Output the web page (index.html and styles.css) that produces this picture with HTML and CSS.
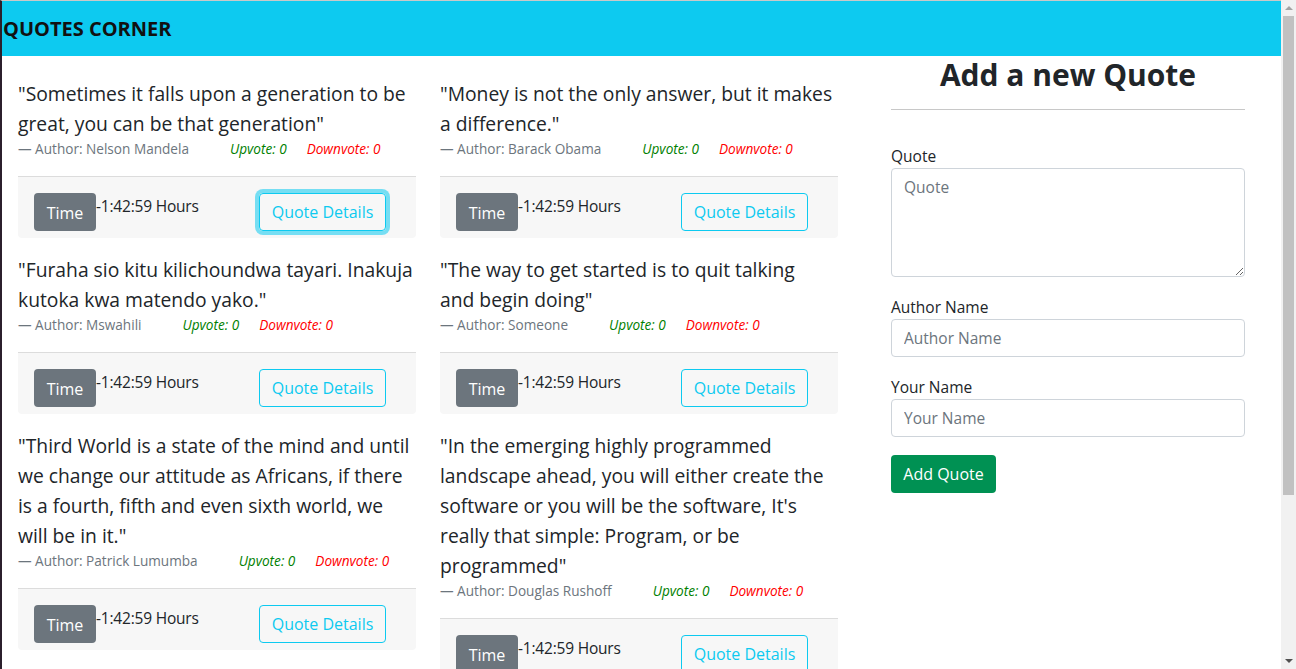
FILE: index.html
```html
<!DOCTYPE html>
<html lang="en">
<head>
<meta charset="utf-8">
<title>Quotes Corner</title>
<link rel="stylesheet" href="styles.css">
</head>
<body>
<nav class="navbar"><span class="brand">QUOTES CORNER</span></nav>
<main class="page">
  <section class="quotes">
    <article class="quote">
      <p class="quote-text">"Sometimes it falls upon a generation to be great, you can be that generation"</p>
      <p class="meta"><span class="author">— Author: Nelson Mandela</span><span class="up">Upvote: 0</span><span class="down">Downvote: 0</span></p>
      <div class="quote-foot">
        <div class="time-group"><span class="btn btn-time">Time</span><span class="time-val">-1:42:59 Hours</span></div>
        <button class="btn btn-details focused">Quote Details</button>
      </div>
    </article>
    <article class="quote">
      <p class="quote-text">"Money is not the only answer, but it makes a difference."</p>
      <p class="meta"><span class="author">— Author: Barack Obama</span><span class="up">Upvote: 0</span><span class="down">Downvote: 0</span></p>
      <div class="quote-foot">
        <div class="time-group"><span class="btn btn-time">Time</span><span class="time-val">-1:42:59 Hours</span></div>
        <button class="btn btn-details">Quote Details</button>
      </div>
    </article>
    <article class="quote">
      <p class="quote-text">"Furaha sio kitu kilichoundwa tayari. Inakuja kutoka kwa matendo yako."</p>
      <p class="meta"><span class="author">— Author: Mswahili</span><span class="up">Upvote: 0</span><span class="down">Downvote: 0</span></p>
      <div class="quote-foot">
        <div class="time-group"><span class="btn btn-time">Time</span><span class="time-val">-1:42:59 Hours</span></div>
        <button class="btn btn-details">Quote Details</button>
      </div>
    </article>
    <article class="quote">
      <p class="quote-text">"The way to get started is to quit talking and&nbsp;begin doing"</p>
      <p class="meta"><span class="author">— Author: Someone</span><span class="up">Upvote: 0</span><span class="down">Downvote: 0</span></p>
      <div class="quote-foot">
        <div class="time-group"><span class="btn btn-time">Time</span><span class="time-val">-1:42:59 Hours</span></div>
        <button class="btn btn-details">Quote Details</button>
      </div>
    </article>
    <article class="quote">
      <p class="quote-text">"Third World is a state of the mind and until we change our attitude as Africans, if there is a fourth, fifth and even sixth world, we will be in it."</p>
      <p class="meta"><span class="author">— Author: Patrick Lumumba</span><span class="up">Upvote: 0</span><span class="down">Downvote: 0</span></p>
      <div class="quote-foot">
        <div class="time-group"><span class="btn btn-time">Time</span><span class="time-val">-1:42:59 Hours</span></div>
        <button class="btn btn-details">Quote Details</button>
      </div>
    </article>
    <article class="quote">
      <p class="quote-text">"In the emerging highly programmed landscape ahead, you will either create the software or you will be the software, It's really that simple: Program, or be programmed"</p>
      <p class="meta"><span class="author">— Author: Douglas Rushoff</span><span class="up">Upvote: 0</span><span class="down">Downvote: 0</span></p>
      <div class="quote-foot">
        <div class="time-group"><span class="btn btn-time">Time</span><span class="time-val">-1:42:59 Hours</span></div>
        <button class="btn btn-details">Quote Details</button>
      </div>
    </article>
  </section>
  <aside class="form-panel">
    <h2 class="form-title">Add a new Quote</h2>
    <hr class="rule">
    <form class="quote-form">
      <div class="field">
        <label class="label" for="q">Quote</label>
        <textarea id="q" class="control textarea" placeholder="Quote"></textarea>
      </div>
      <div class="field">
        <label class="label" for="a">Author Name</label>
        <input id="a" class="control" type="text" placeholder="Author Name">
      </div>
      <div class="field">
        <label class="label" for="y">Your Name</label>
        <input id="y" class="control" type="text" placeholder="Your Name">
      </div>
      <button type="button" class="btn btn-add">Add Quote</button>
    </form>
  </aside>
</main>
<div class="scrollbar" aria-hidden="true">
  <span class="sb-arrow sb-up"></span>
  <span class="sb-thumb"></span>
  <span class="sb-arrow sb-down"></span>
</div>
</body>
</html>
```
FILE: styles.css
```css
html{background:#fff}
body{
  margin:0;
  border-left:2px solid #2b1f2c;
  border-top:1px solid #c9c9c9;
  font-family:"Open Sans","Noto Sans",sans-serif;
  font-size:16px;
  line-height:1.5;
  color:#212529;
  min-height:895px;
  box-sizing:border-box;
}
.navbar{
  background:#0dcaf0;
  height:55px;
  display:flex;
  align-items:center;
  padding-left:1px;
}
.brand{
  font-weight:700;
  font-size:20px;
  color:#111;
  line-height:24px;
  margin-top:1px;
}
.page{
  display:flex;
  align-items:flex-start;
}
.quotes{
  display:grid;
  grid-template-columns:398px 398px;
  column-gap:24px;
  align-items:start;
  padding:6px 0 0 16px;
}
.quote{padding-top:17px}
.quote-text{
  margin:0;
  font-size:19.3px;
  line-height:30px;
}
.meta{
  margin:0 0 16px;
  padding-bottom:2px;
  font-size:13.6px;
  line-height:19px;
  display:flex;
  align-items:baseline;
}
.author{color:#6c757d}
.up{color:#008000;font-style:italic;margin-left:41px}
.down{color:#ff0000;font-style:italic;margin-left:20px}
.quote-foot{
  background:#f7f7f7;
  border-top:1px solid #dcdcdc;
  padding:16px 16px 7px;
  display:flex;
  align-items:flex-start;
  border-radius:0 0 4px 4px;
}
.time-group{
  width:225px;
  display:flex;
  align-items:flex-start;
}
.btn{
  display:inline-flex;
  align-items:center;
  justify-content:center;
  box-sizing:border-box;
  height:38px;
  padding:0 12px;
  border-radius:4px;
  font-family:inherit;
  font-size:16px;
  line-height:24px;
  border:1px solid transparent;
  background:none;
}
.btn-time{
  background:#6c757d;
  color:#fff;
  width:62px;
  padding-top:1px;
}
.time-val{
  font-size:15.5px;
  line-height:24px;
  margin-top:1px;
  letter-spacing:-0.2px;
}
.btn-details{
  color:#0dcaf0;
  border-color:#0dcaf0;
  width:127px;
  white-space:nowrap;
}
.btn-details.focused{
  box-shadow:0 0 0 4px rgba(13,202,240,.55);
}
.form-panel{
  width:354px;
  margin-left:53px;
}
.form-title{
  margin:0 0 15px;
  font-size:30px;
  line-height:38px;
  font-weight:700;
  text-align:center;
  color:#212529;
}
.rule{
  margin:0;
  border:0;
  border-top:1px solid #c8c8c8;
}
.quote-form{
  padding-top:34px;
}
.field{margin-bottom:18px}
.label{
  display:block;
  font-size:15.5px;
  line-height:24px;
}
.control{
  display:block;
  width:100%;
  box-sizing:border-box;
  height:38px;
  padding:6px 12px;
  font-family:inherit;
  font-size:15.5px;
  line-height:24px;
  color:#212529;
  border:1px solid #ced4da;
  border-radius:4px;
  background:#fff;
  margin:0;
}
.control::placeholder{color:#6c757d}
.textarea{
  height:109px;
  resize:vertical;
}
.btn-add{
  background:#009153;
  color:#fff;
  width:105px;
  white-space:nowrap;
}
.scrollbar{
  position:fixed;
  top:0;
  right:0;
  width:15px;
  height:100%;
  background:#f1f1f1;
  display:flex;
  flex-direction:column;
  align-items:center;
}
.sb-arrow{
  width:0;
  height:0;
  border-left:4px solid transparent;
  border-right:4px solid transparent;
  flex:none;
}
.sb-up{
  border-bottom:4px solid #a3a3a3;
  margin-top:6px;
}
.sb-thumb{
  width:11px;
  height:479px;
  background:#c1c1c1;
  margin-top:6px;
  flex:none;
}
.sb-down{
  border-top:4px solid #505050;
  margin-top:auto;
  margin-bottom:6px;
}
```
